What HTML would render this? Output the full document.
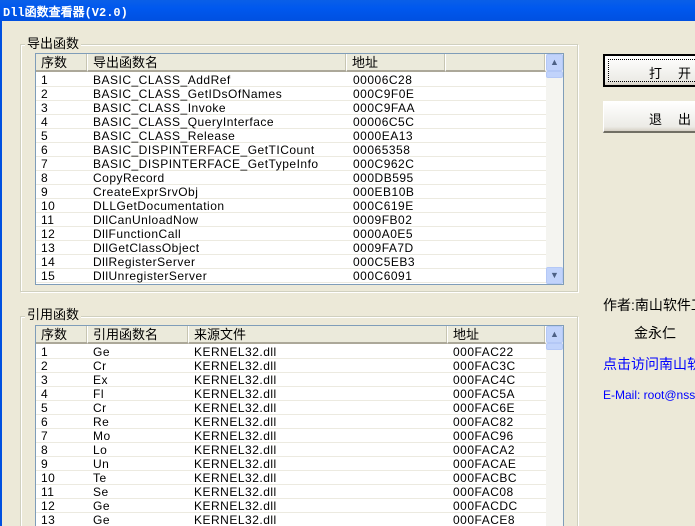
<!DOCTYPE html>
<html><head><meta charset="utf-8"><style>
*{margin:0;padding:0;box-sizing:border-box}
html,body{width:695px;height:526px;overflow:hidden}
body{background:#ECE9D8;font-family:"Liberation Sans","Noto Sans CJK SC",sans-serif;font-size:12px;color:#000;position:relative}
.abs{position:absolute}
#title{left:0;top:0;width:695px;height:21px;background:linear-gradient(#0a5fe8,#0058ee 40%,#0050e0);color:#fff;font:bold 12px "Liberation Mono","WenQuanYi Zen Hei",monospace;padding:3px 0 0 3px}
#lb{left:0;top:21px;width:2px;height:505px;background:#0050e0}
.grp{border:1px solid #D0D0BF;box-shadow:inset 1px 1px 0 #fff,1px 1px 0 #fff}
.glab{background:#ECE9D8;padding:0 2px;font-size:13px;line-height:14px}
.list{background:#fff;border:1px solid #7F9DB9;overflow:hidden}
.hdr{position:absolute;top:0;height:18px;background:#EBEADB;border-right:1px solid #fff;box-shadow:inset -1px 0 0 #C7C5B2;border-bottom:2px solid #ACA899;padding:2px 0 0 5px;font-size:13px;line-height:14px}
.row{position:absolute;left:0;height:14px;border-bottom:1px solid #ECEAE0;width:510px}
.row span{position:absolute;top:0;line-height:14px;white-space:nowrap;letter-spacing:.5px}
.sb{position:absolute;top:0;right:0;width:17px;bottom:0;background:#F4F4F0}
.sbb{position:absolute;left:0;width:17px;height:17px;background:#C1D3FB;border:1px solid #B4C8F6;border-radius:2px;color:#4D6185;font-size:9px;text-align:center;line-height:15px}
.btn{background:linear-gradient(#fff,#ECEBE6 85%,#D6D0C5);font-size:13px;letter-spacing:16px;text-align:left;white-space:nowrap;overflow:hidden}
#right{left:600px;top:40px;width:95px;height:400px;overflow:hidden}
#right div{position:absolute;white-space:nowrap}
</style></head><body>
<div id="title" class="abs">Dll函数查看器(V2.0)</div>
<div id="lb" class="abs"></div>

<div class="abs grp" style="left:20px;top:44px;width:558px;height:248px"></div>
<div class="abs glab" style="left:25px;top:37px">导出函数</div>
<div class="abs list" style="left:35px;top:53px;width:529px;height:232px">
 <div class="hdr" style="left:0;width:52px">序数</div>
 <div class="hdr" style="left:52px;width:259px">导出函数名</div>
 <div class="hdr" style="left:311px;width:99px">地址</div>
 <div class="hdr" style="left:410px;width:100px"></div>
 <div class="row" style="top:19px"><span style="left:5px">1</span><span style="left:57px">BASIC_CLASS_AddRef</span><span style="left:317px">00006C28</span></div>
 <div class="row" style="top:33px"><span style="left:5px">2</span><span style="left:57px">BASIC_CLASS_GetIDsOfNames</span><span style="left:317px">000C9F0E</span></div>
 <div class="row" style="top:47px"><span style="left:5px">3</span><span style="left:57px">BASIC_CLASS_Invoke</span><span style="left:317px">000C9FAA</span></div>
 <div class="row" style="top:61px"><span style="left:5px">4</span><span style="left:57px">BASIC_CLASS_QueryInterface</span><span style="left:317px">00006C5C</span></div>
 <div class="row" style="top:75px"><span style="left:5px">5</span><span style="left:57px">BASIC_CLASS_Release</span><span style="left:317px">0000EA13</span></div>
 <div class="row" style="top:89px"><span style="left:5px">6</span><span style="left:57px">BASIC_DISPINTERFACE_GetTICount</span><span style="left:317px">00065358</span></div>
 <div class="row" style="top:103px"><span style="left:5px">7</span><span style="left:57px">BASIC_DISPINTERFACE_GetTypeInfo</span><span style="left:317px">000C962C</span></div>
 <div class="row" style="top:117px"><span style="left:5px">8</span><span style="left:57px">CopyRecord</span><span style="left:317px">000DB595</span></div>
 <div class="row" style="top:131px"><span style="left:5px">9</span><span style="left:57px">CreateExprSrvObj</span><span style="left:317px">000EB10B</span></div>
 <div class="row" style="top:145px"><span style="left:5px">10</span><span style="left:57px">DLLGetDocumentation</span><span style="left:317px">000C619E</span></div>
 <div class="row" style="top:159px"><span style="left:5px">11</span><span style="left:57px">DllCanUnloadNow</span><span style="left:317px">0009FB02</span></div>
 <div class="row" style="top:173px"><span style="left:5px">12</span><span style="left:57px">DllFunctionCall</span><span style="left:317px">0000A0E5</span></div>
 <div class="row" style="top:187px"><span style="left:5px">13</span><span style="left:57px">DllGetClassObject</span><span style="left:317px">0009FA7D</span></div>
 <div class="row" style="top:201px"><span style="left:5px">14</span><span style="left:57px">DllRegisterServer</span><span style="left:317px">000C5EB3</span></div>
 <div class="row" style="top:215px"><span style="left:5px">15</span><span style="left:57px">DllUnregisterServer</span><span style="left:317px">000C6091</span></div>
 <div class="sb"><div class="sbb" style="top:0">▲</div><div class="sbb" style="top:17px;height:7px"></div><div class="sbb" style="bottom:0">▼</div></div>
</div>

<div class="abs grp" style="left:20px;top:316px;width:558px;height:215px"></div>
<div class="abs glab" style="left:25px;top:308px">引用函数</div>
<div class="abs list" style="left:35px;top:325px;width:529px;height:205px">
 <div class="hdr" style="left:0;width:52px">序数</div>
 <div class="hdr" style="left:52px;width:101px">引用函数名</div>
 <div class="hdr" style="left:153px;width:259px">来源文件</div>
 <div class="hdr" style="left:412px;width:98px">地址</div>
 <div class="row" style="top:19px"><span style="left:5px">1</span><span style="left:57px">Ge</span><span style="left:158px">KERNEL32.dll</span><span style="left:417px">000FAC22</span></div>
 <div class="row" style="top:33px"><span style="left:5px">2</span><span style="left:57px">Cr</span><span style="left:158px">KERNEL32.dll</span><span style="left:417px">000FAC3C</span></div>
 <div class="row" style="top:47px"><span style="left:5px">3</span><span style="left:57px">Ex</span><span style="left:158px">KERNEL32.dll</span><span style="left:417px">000FAC4C</span></div>
 <div class="row" style="top:61px"><span style="left:5px">4</span><span style="left:57px">Fl</span><span style="left:158px">KERNEL32.dll</span><span style="left:417px">000FAC5A</span></div>
 <div class="row" style="top:75px"><span style="left:5px">5</span><span style="left:57px">Cr</span><span style="left:158px">KERNEL32.dll</span><span style="left:417px">000FAC6E</span></div>
 <div class="row" style="top:89px"><span style="left:5px">6</span><span style="left:57px">Re</span><span style="left:158px">KERNEL32.dll</span><span style="left:417px">000FAC82</span></div>
 <div class="row" style="top:103px"><span style="left:5px">7</span><span style="left:57px">Mo</span><span style="left:158px">KERNEL32.dll</span><span style="left:417px">000FAC96</span></div>
 <div class="row" style="top:117px"><span style="left:5px">8</span><span style="left:57px">Lo</span><span style="left:158px">KERNEL32.dll</span><span style="left:417px">000FACA2</span></div>
 <div class="row" style="top:131px"><span style="left:5px">9</span><span style="left:57px">Un</span><span style="left:158px">KERNEL32.dll</span><span style="left:417px">000FACAE</span></div>
 <div class="row" style="top:145px"><span style="left:5px">10</span><span style="left:57px">Te</span><span style="left:158px">KERNEL32.dll</span><span style="left:417px">000FACBC</span></div>
 <div class="row" style="top:159px"><span style="left:5px">11</span><span style="left:57px">Se</span><span style="left:158px">KERNEL32.dll</span><span style="left:417px">000FAC08</span></div>
 <div class="row" style="top:173px"><span style="left:5px">12</span><span style="left:57px">Ge</span><span style="left:158px">KERNEL32.dll</span><span style="left:417px">000FACDC</span></div>
 <div class="row" style="top:187px"><span style="left:5px">13</span><span style="left:57px">Ge</span><span style="left:158px">KERNEL32.dll</span><span style="left:417px">000FACE8</span></div>
 <div class="sb"><div class="sbb" style="top:0">▲</div><div class="sbb" style="top:17px;height:7px"></div></div>
</div>

<div id="right" class="abs">
 <div class="btn" style="left:3px;top:14px;width:92px;height:33px;border:2px solid #000;border-right:none;padding-top:7px;padding-left:44px;box-shadow:inset 4px 4px 0 -3px transparent"><span style="position:absolute;left:3px;top:3px;right:0;bottom:3px;border:1px dotted #000;border-right:none"></span>打开</div>
 <div class="btn" style="left:3px;top:61px;width:92px;height:32px;border-top:1px solid #fff;border-left:1px solid #fff;border-bottom:2px solid #716F64;padding-top:7px;padding-left:45px">退出</div>
 <div style="left:3px;top:255px;font-size:14px">作者:南山软件工作室</div>
 <div style="left:34px;top:283px;font-size:14px">金永仁</div>
 <div style="left:3px;top:314px;font-size:14px;color:#0000ff">点击访问南山软件</div>
 <div style="left:3px;top:348px;font-size:12px;color:#0000ff">E-Mail: root@nssoft.net</div>
</div>
</body></html>
